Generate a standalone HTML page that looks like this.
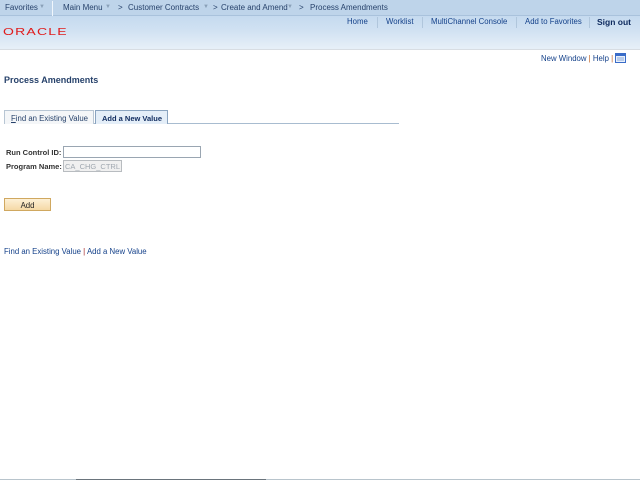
<!DOCTYPE html>
<html><head><meta charset="utf-8"><style>
*{margin:0;padding:0;box-sizing:border-box}
body{width:640px;height:480px;background:#fff;font-family:"Liberation Sans",Arial,sans-serif;font-size:7.8px;color:#000;position:relative;overflow:hidden}
.hdr{position:absolute;left:0;top:0;width:640px;height:50px;background:linear-gradient(#bcd3ea 0,#c5daef 16px,#d0e1f2 30px,#e6eff8 48px);border-bottom:1px solid #d8dde3}
.nav{position:absolute;left:0;top:0;width:640px;height:16px;background:#bed4ea;border-bottom:1px solid #a9c2dc}
.nav span{position:absolute;top:3px;color:#27426b;white-space:nowrap;font-size:8px}
.nav span.ar{color:#8aa0b8;font-size:6px;top:4px}
.sep{position:absolute;top:1px;width:1px;height:15px;background:#f0f6fc}
.links{position:absolute;top:17px;color:#14418a;white-space:nowrap}
.vs{position:absolute;top:17px;width:1px;height:11px;background:#b0c6dc}
.oracle{position:absolute;left:3px;top:25px;color:#e01b1b;font-size:14px;letter-spacing:1.2px;font-weight:normal;transform:scaleY(0.75);transform-origin:left top;font-family:"Liberation Sans",sans-serif}
.t{position:absolute;white-space:nowrap}
</style></head><body>
<div class="hdr"></div>
<div class="nav">
<span style="left:5px">Favorites</span><span class="ar" style="left:39px">▼</span>
<div class="sep" style="left:52px"></div>
<span style="left:63px">Main Menu</span><span class="ar" style="left:105px">▼</span>
<span style="left:118px">&gt;</span>
<span style="left:128px">Customer Contracts</span><span class="ar" style="left:203px">▼</span>
<span style="left:213px">&gt;</span>
<span style="left:221px">Create and Amend</span><span class="ar" style="left:287px">▼</span>
<span style="left:299px">&gt;</span>
<span style="left:310px">Process Amendments</span>
</div>
<span class="links" style="left:347px">Home</span>
<div class="vs" style="left:377px"></div>
<span class="links" style="left:386px">Worklist</span>
<div class="vs" style="left:422px"></div>
<span class="links" style="left:431px">MultiChannel Console</span>
<div class="vs" style="left:516px"></div>
<span class="links" style="left:525px">Add to Favorites</span>
<div class="vs" style="left:589px"></div>
<span class="links" style="left:597px;font-weight:bold;color:#0e2a5e;font-size:8.5px">Sign out</span>
<div class="oracle">ORACLE</div>

<div class="t" style="left:541px;top:54px;color:#14418a">New Window <span style="color:#c06020">|</span> Help <span style="color:#c06020">|</span></div>
<svg style="position:absolute;left:615px;top:53px" width="11" height="10"><rect x="0.5" y="0.5" width="10" height="9" fill="#e8f0fb" stroke="#3a6cc8"/><rect x="1" y="1" width="9" height="2" fill="#3a6cc8"/><path d="M2 5h7M2 7h7" stroke="#8aa8d8"/></svg>

<div class="t" style="left:4px;top:75px;font-size:9px;font-weight:bold;color:#27426b">Process Amendments</div>

<div style="position:absolute;left:4px;top:123px;width:395px;height:1px;background:#a8bcd0"></div>
<div class="t" style="left:4px;top:110px;width:90px;height:14px;border:1px solid #b8c6d4;border-bottom:none;background:#f4f6f8;color:#27426b;padding:3px 0 0 6px"><u>F</u>ind an Existing Value</div>
<div class="t" style="left:95px;top:110px;width:73px;height:14px;border:1px solid #8aa4c0;border-bottom:none;background:#e4eef8;color:#0e2a5e;font-weight:bold;padding:3px 0 0 6px;font-size:7.5px">Add a New Value</div>

<div class="t" style="left:6px;top:148px;font-weight:bold;color:#333;font-size:7.5px">Run Control ID:</div>
<div style="position:absolute;left:63px;top:146px;width:138px;height:12px;border:1px solid #9aa6b2;background:#fff"></div>
<div class="t" style="left:6px;top:162px;font-weight:bold;color:#333;font-size:7.5px">Program Name:</div>
<div class="t" style="left:63px;top:160px;width:59px;height:12px;border:1px solid #b8bcc0;background:#f0f0f0;color:#a0a8b0;font-size:7.5px;padding:1px 0 0 1px;overflow:hidden">CA_CHG_CTRL</div>

<div class="t" style="left:4px;top:198px;width:47px;height:13px;border:1px solid #d0a860;background:linear-gradient(#fdf0d6,#f5d9a6);text-align:center;padding-top:2px;color:#222">Add</div>

<div class="t" style="left:4px;top:247px;color:#14418a">Find an Existing Value <span style="color:#a02020">|</span> Add a New Value</div>

<div style="position:absolute;left:0;top:479px;width:640px;height:1px;background:#b8c4cc"></div>
<div style="position:absolute;left:76px;top:479px;width:190px;height:1px;background:#6a747c"></div>
</body></html>
